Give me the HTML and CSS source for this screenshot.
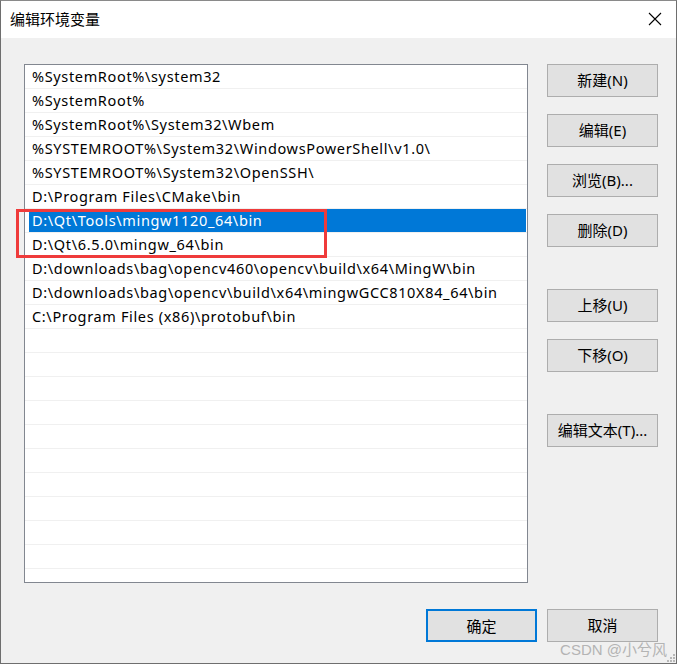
FILE: index.html
```html
<!DOCTYPE html>
<html lang="zh">
<head>
<meta charset="utf-8">
<title>编辑环境变量</title>
<link rel="stylesheet" href="styles.css">
</head>
<body>
<div class="window">
  <div class="titlebar">
    <span class="title">编辑环境变量</span>
    <svg class="close" width="14" height="14" viewBox="0 0 14 14"><path d="M1 1 L13 13 M13 1 L1 13" stroke="#000" stroke-width="1.1" fill="none"/></svg>
  </div>
  <div class="content">
    <div class="main">
      <div class="list">
        <div class="row"><span class="cell">%SystemRoot%\system32</span></div>
        <div class="row"><span class="cell">%SystemRoot%</span></div>
        <div class="row"><span class="cell">%SystemRoot%\System32\Wbem</span></div>
        <div class="row"><span class="cell">%SYSTEMROOT%\System32\WindowsPowerShell\v1.0\</span></div>
        <div class="row"><span class="cell">%SYSTEMROOT%\System32\OpenSSH\</span></div>
        <div class="row"><span class="cell">D:\Program Files\CMake\bin</span></div>
        <div class="row"><span class="cell selected">D:\Qt\Tools\mingw1120_64\bin</span></div>
        <div class="row"><span class="cell">D:\Qt\6.5.0\mingw_64\bin</span></div>
        <div class="row"><span class="cell">D:\downloads\bag\opencv460\opencv\build\x64\MingW\bin</span></div>
        <div class="row"><span class="cell">D:\downloads\bag\opencv\build\x64\mingwGCC810X84_64\bin</span></div>
        <div class="row"><span class="cell">C:\Program Files (x86)\protobuf\bin</span></div>
        <div class="row"><span class="cell"></span></div>
        <div class="row"><span class="cell"></span></div>
        <div class="row"><span class="cell"></span></div>
        <div class="row"><span class="cell"></span></div>
        <div class="row"><span class="cell"></span></div>
        <div class="row"><span class="cell"></span></div>
        <div class="row"><span class="cell"></span></div>
        <div class="row"><span class="cell"></span></div>
        <div class="row"><span class="cell"></span></div>
        <div class="row"><span class="cell"></span></div>
        <div class="row last"><span class="cell"></span></div>
        <div class="mark"></div>
      </div>
      <div class="side">
        <button class="btn">新建(N)</button>
        <button class="btn">编辑(E)</button>
        <button class="btn">浏览(B)...</button>
        <button class="btn">删除(D)</button>
        <button class="btn sep">上移(U)</button>
        <button class="btn">下移(O)</button>
        <button class="btn sep">编辑文本(T)...</button>
      </div>
    </div>
    <div class="footer">
      <button class="btn default">确定</button>
      <button class="btn">取消</button>
    </div>
  </div>
  <div class="watermark">CSDN @小兮风</div>
  <div class="grip">
    <span></span><span></span><span></span><span></span><span></span><span></span>
  </div>
</div>
</body>
</html>
```
FILE: styles.css
```css
* { box-sizing: border-box; }
html, body { margin: 0; padding: 0; }
body {
  width: 677px;
  height: 664px;
  overflow: hidden;
  background: #f0f0f0;
  font-family: "Noto Sans", "Noto Sans CJK SC", sans-serif;
  font-size: 15px;
  color: #000;
}
.window {
  position: relative;
  width: 677px;
  height: 664px;
  border: 1px solid #6e6e6e;
  border-top-color: #8a8a8a;
  background: #f0f0f0;
  display: flex;
  flex-direction: column;
}
.titlebar {
  height: 37px;
  background: #fff;
  display: flex;
  align-items: center;
  justify-content: space-between;
  padding: 0 14px 0 9px;
  flex: none;
}
.title {
  font-family: "Noto Sans CJK SC", sans-serif;
  font-size: 15px;
  line-height: 20px;
  margin-top: -2px;
}
.close { display: block; margin-top: -2px; }
.content {
  padding: 26px 18px 0 23px;
  display: flex;
  flex-direction: column;
}
.main {
  display: grid;
  grid-template-columns: 504px 111px;
  column-gap: 19px;
}
.list {
  position: relative;
  height: 519px;
  background: #fff;
  border: 1px solid #828790;
}
.row {
  height: 24px;
  border-bottom: 1px solid #f0f0f0;
  padding-left: 4px;
  padding-right: 1px;
}
.cell {
  display: block;
  height: 23px;
  line-height: 23px;
  padding-left: 3px;
  white-space: nowrap;
  font-size: 14.5px;
  letter-spacing: 0.65px;
}
.cell.selected {
  background: #0078d7;
  color: #fff;
}
.mark {
  position: absolute;
  left: -9px;
  top: 144px;
  width: 311px;
  height: 49px;
  border: 3px solid #ef3b3b;
}
.side {
  display: flex;
  flex-direction: column;
  gap: 17px;
}
.btn {
  width: 111px;
  height: 33px;
  background: #e1e1e1;
  border: 1px solid #adadad;
  font-family: "Noto Sans", "Noto Sans CJK SC", sans-serif;
  font-size: 15px;
  color: #000;
  padding: 0;
  margin: 0;
  line-height: 31px;
}
.btn.sep { margin-top: 25px; }
.btn.default { border: 2px solid #0078d7; }
.footer {
  display: flex;
  justify-content: flex-end;
  gap: 10px;
  padding-top: 26px;
}
.watermark {
  position: absolute;
  right: 9px;
  bottom: 4px;
  font-family: "Liberation Sans", "Noto Sans CJK SC", sans-serif;
  font-size: 15px;
  color: #b4b4b4;
}
.grip {
  position: absolute;
  right: 1px;
  bottom: 1px;
  width: 9px;
  height: 9px;
}
.grip span {
  position: absolute;
  width: 2px;
  height: 2px;
  background: #b8b8b8;
}
.grip span:nth-child(1) { right: 0; bottom: 0; }
.grip span:nth-child(2) { right: 3px; bottom: 0; }
.grip span:nth-child(3) { right: 6px; bottom: 0; }
.grip span:nth-child(4) { right: 0; bottom: 3px; }
.grip span:nth-child(5) { right: 3px; bottom: 3px; }
.grip span:nth-child(6) { right: 0; bottom: 6px; }
```
